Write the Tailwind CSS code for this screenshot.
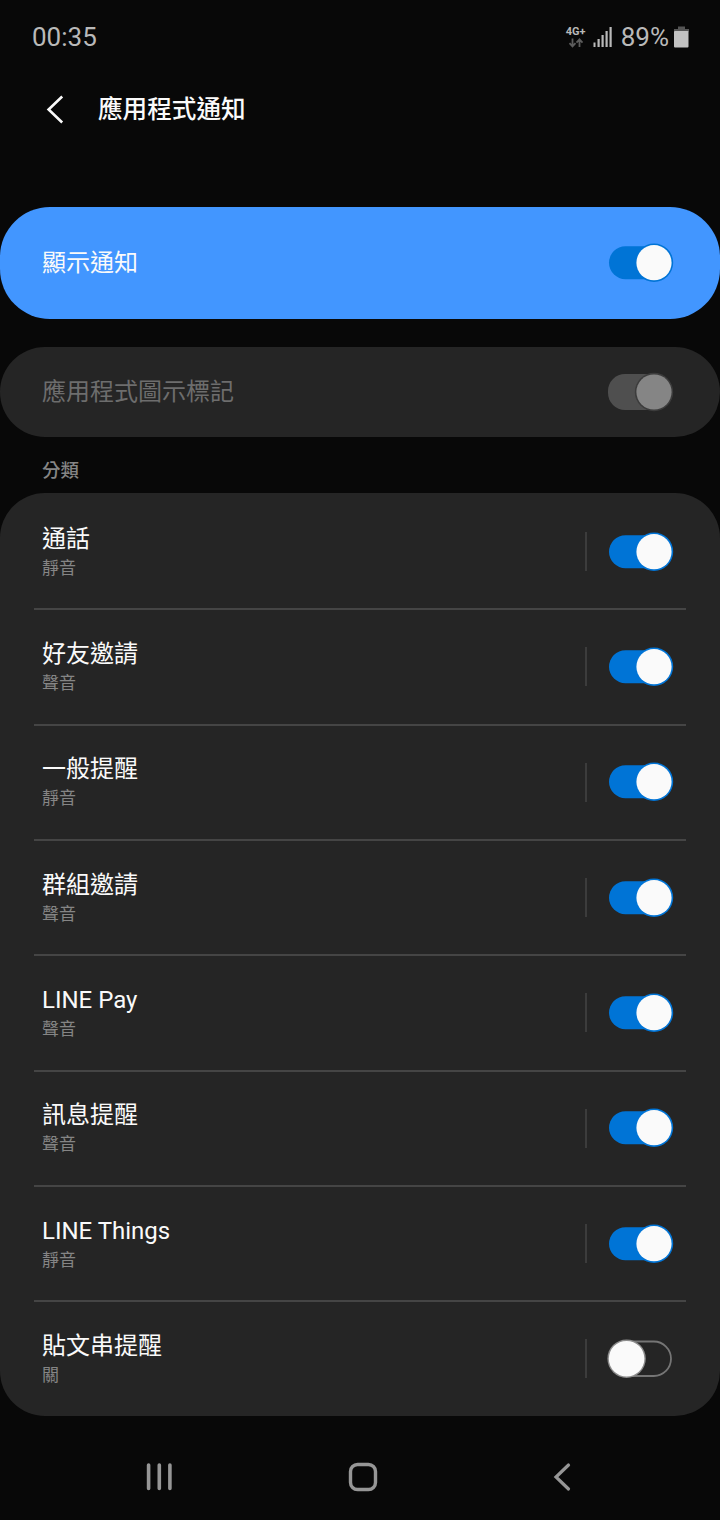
<!DOCTYPE html>
<html lang="zh-Hant">

<head>
    <meta charset="UTF-8">
    <meta name="viewport" content="width=device-width, initial-scale=1.0">
    <title>應用程式通知</title>
    <script src="https://cdn.jsdelivr.net/npm/@tailwindcss/browser@4"></script>
</head>

<body class="bg-[#080808] text-[#fafafa] font-[Roboto,'Noto_Sans_CJK_TC',sans-serif] overflow-hidden">
    <!-- Toggle shapes -->
    <svg class="hidden">
        <symbol id="toggle-on" viewBox="0 0 68 40">
            <rect x="3" y="3.2" width="60" height="33" rx="16.5" fill="#0074d6" />
            <circle cx="48" cy="19.7" r="19.2" fill="#0074d6" />
            <circle cx="48" cy="19.7" r="17.6" fill="#fafafa" />
        </symbol>
        <symbol id="toggle-disabled" viewBox="0 0 68 40">
            <rect x="2" y="2" width="64" height="36" rx="17" fill="#4f4f4f" />
            <circle cx="48" cy="20" r="19.2" fill="#3c3c3c" />
            <circle cx="48" cy="20" r="17.6" fill="#858585" />
        </symbol>
        <symbol id="toggle-off" viewBox="0 0 68 40">
            <rect x="3" y="2.5" width="62" height="34.5" rx="17.2" fill="none" stroke="#757575" stroke-width="1.8" />
            <circle cx="20.6" cy="19.7" r="19.2" fill="#8c8c8c" />
            <circle cx="20.6" cy="19.7" r="17.8" fill="#fafafa" />
        </symbol>
    </svg>

    <div class="w-[720px] h-[1520px] flex flex-col">
        <!-- Status bar -->
        <div class="h-[73px] shrink-0 flex items-center justify-between pl-8 pr-[31px] text-[#b9b9b9] text-[26px]">
            <span class="leading-none">00:35</span>
            <div class="flex items-center">
                <div class="w-[22px] flex flex-col items-center mr-[6px]">
                    <span class="text-[11px] leading-[12px] font-bold">4G+</span>
                    <svg class="w-4 h-[10px]" viewBox="0 0 16 10" fill="none" stroke="#5c5c5c" stroke-width="1.8">
                        <path d="M4.5 0.5V8M1.5 5.2L4.5 8.4L7.5 5.2M11.5 9V1.5M8.5 4.6L11.5 1.4L14.5 4.6" />
                    </svg>
                </div>
                <svg class="w-5 h-5 mr-[8px]" viewBox="0 0 20 20" fill="#b9b9b9">
                    <rect x="0.5" y="15.5" width="2" height="4.5" />
                    <rect x="4.5" y="12" width="2.2" height="8" />
                    <rect x="8.5" y="8" width="2.2" height="12" />
                    <rect x="12.5" y="4" width="2.2" height="16" />
                    <rect x="16.5" y="0" width="2.2" height="20" />
                </svg>
                <span class="leading-none mr-[5px]">89%</span>
                <svg class="w-[15px] h-[22px]" viewBox="0 0 15 22">
                    <path d="M4 0.5H11V3H15V6H0V3H4Z" fill="#555555" />
                    <rect y="5" width="14.5" height="16.5" rx="1" fill="#c2c2c2" />
                </svg>
            </div>
        </div>

        <!-- App bar -->
        <div class="h-[74px] shrink-0 flex items-center pl-[46px]">
            <svg class="w-5 h-[30px] mr-8" viewBox="0 0 20 30" fill="none" stroke="#fafafa" stroke-width="2.6">
                <path d="M16.2 1.5L2.6 14.5L16.2 27.5" />
            </svg>
            <h1 class="text-[24.6px] leading-none font-medium">應用程式通知</h1>
        </div>

        <!-- App name, scrolled almost out of view -->
        <div class="h-[60px] shrink-0 pt-[32px]">
            <div class="h-[5px] overflow-hidden flex flex-col justify-end items-center">
                <span class="text-[39px] leading-[39px] mb-[-2px] pl-[2px]">LINE</span>
            </div>
        </div>

        <div class="h-[112px] shrink-0 rounded-[50px] bg-[#4296ff] flex items-center justify-between pl-[42px] pr-[46px]">
            <span class="text-2xl">顯示通知</span>
            <svg class="w-[68px] h-10">
                <use href="#toggle-on" />
            </svg>
        </div>

        <div class="h-[90px] shrink-0 mt-7 rounded-[45px] bg-[#252525] flex items-center justify-between pl-[42px] pr-[46px]">
            <span class="text-2xl text-[#6d6d6d]">應用程式圖示標記</span>
            <svg class="w-[68px] h-10">
                <use href="#toggle-disabled" />
            </svg>
        </div>

        <h2 class="h-[56px] shrink-0 pl-[42px] pt-[21px] text-[18.5px] leading-[27px] font-medium text-[#858585]">分類</h2>

        <div id="categories" class="shrink-0 rounded-[45px] bg-[#252525] overflow-hidden"></div>

        <!-- Navigation bar -->
        <div class="grow flex items-center justify-between pl-[145px] pr-[148px] pt-[18px] text-[#969696]">
            <svg class="w-7 h-[30px]" viewBox="0 0 28 30" stroke="currentColor" stroke-width="3.6" stroke-linecap="round">
                <path d="M3.6 3V26.5M14.3 3V26.5M24.9 3V26.5" />
            </svg>
            <svg class="w-[30px] h-[30px]" viewBox="0 0 30 30" fill="none" stroke="currentColor" stroke-width="3.4">
                <rect x="2.5" y="2.5" width="25" height="25" rx="7" />
            </svg>
            <svg class="w-5 h-[30px]" viewBox="0 0 20 30" fill="none" stroke="currentColor" stroke-width="3.2" stroke-linecap="round">
                <path d="M16.5 3L4 15L16.5 27" />
            </svg>
        </div>
    </div>

    <script>
        const categories = [
            { name: '通話', state: '靜音', on: true },
            { name: '好友邀請', state: '聲音', on: true },
            { name: '一般提醒', state: '靜音', on: true },
            { name: '群組邀請', state: '聲音', on: true },
            { name: 'LINE Pay', state: '聲音', on: true },
            { name: '訊息提醒', state: '聲音', on: true },
            { name: 'LINE Things', state: '靜音', on: true },
            { name: '貼文串提醒', state: '關', on: false },
        ];

        document.getElementById('categories').innerHTML = categories.map((item, i) => `
            <div class="h-[115.33px] px-[34px]">
                <div class="h-full flex items-center pl-2 pr-3 border-t-2 ${i ? 'border-[#454545]' : 'border-transparent'}">
                    <div class="grow">
                        <div class="text-2xl leading-[32px]">${item.name}</div>
                        <div class="text-[17px] leading-[26px] text-[#858585]">${item.state}</div>
                    </div>
                    <div class="w-[2px] h-[39px] bg-[#3c3c3c] mr-[19px]"></div>
                    <svg class="w-[68px] h-10"><use href="#${item.on ? 'toggle-on' : 'toggle-off'}" /></svg>
                </div>
            </div>`).join('');
    </script>
</body>

</html>
